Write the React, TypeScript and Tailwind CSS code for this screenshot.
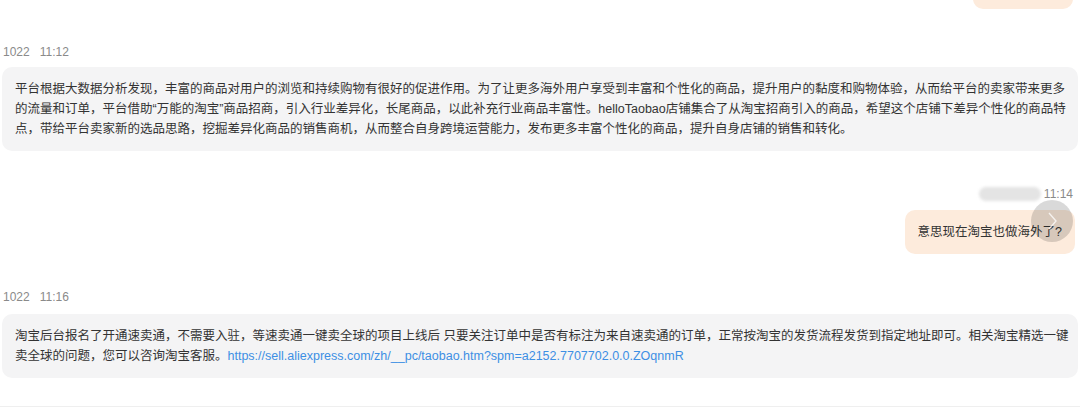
import type { ReactNode } from "react";

const FONT = { fontFamily: '"Liberation Sans", Arial, "Noto Sans CJK SC", sans-serif' };

function Stamp({ children }: { children: ReactNode }) {
  return <div className="h-4 pl-[3px] text-[12px] leading-4 text-[#8a8a8a]">{children}</div>;
}

function GrayBubble({ lines }: { lines: ReactNode[] }) {
  return (
    <div className="mx-[2px] rounded-[10px] bg-[#f4f4f5] px-[13px] py-3 text-[12.5px] leading-5 text-[#333]">
      {lines.map((l, i) => (
        <div key={i} className="whitespace-nowrap">
          {l}
        </div>
      ))}
    </div>
  );
}

export default function App() {
  return (
    <div className="relative h-[416px] w-[1080px] overflow-hidden bg-white" style={FONT}>
      <div className="flex flex-col">
        {/* earlier outgoing bubble, cut off at top */}
        <div className="-mt-9 mr-[7px] flex justify-end">
          <div className="h-[45px] w-[100px] rounded-[10px] bg-[#fdebdc]" />
        </div>

        <div className="mt-[35px]">
          <Stamp>1022&nbsp;&nbsp;&nbsp;11:12</Stamp>
        </div>
        <div className="mt-[7px]">
          <GrayBubble
            lines={[
              "平台根据大数据分析发现，丰富的商品对用户的浏览和持续购物有很好的促进作用。为了让更多海外用户享受到丰富和个性化的商品，提升用户的黏度和购物体验，从而给平台的卖家带来更多",
              "的流量和订单，平台借助“万能的淘宝”商品招商，引入行业差异化，长尾商品，以此补充行业商品丰富性。helloTaobao店铺集合了从淘宝招商引入的商品，希望这个店铺下差异个性化的商品特",
              "点，带给平台卖家新的选品思路，挖掘差异化商品的销售商机，从而整合自身跨境运营能力，发布更多丰富个性化的商品，提升自身店铺的销售和转化。",
            ]}
          />
        </div>

        <div className="mt-[35px] mr-[7px] flex h-4 items-center justify-end gap-[3px]">
          <span className="h-[14px] w-[62px] rounded-full bg-[#e4e4e4] blur-[1.5px]" />
          <span className="text-[12px] leading-4 text-[#8a8a8a]">11:14</span>
        </div>
        <div className="mt-2 mr-[5px] flex justify-end">
          <div className="rounded-[10px] bg-[#fdebdc] px-[13px] py-3 text-[12.5px] leading-5 text-[#333]">
            意思现在淘宝也做海外了?
          </div>
        </div>

        <div className="mt-[35px]">
          <Stamp>1022&nbsp;&nbsp;&nbsp;11:16</Stamp>
        </div>
        <div className="mt-[9px]">
          <GrayBubble
            lines={[
              "淘宝后台报名了开通速卖通，不需要入驻，等速卖通一键卖全球的项目上线后 只要关注订单中是否有标注为来自速卖通的订单，正常按淘宝的发货流程发货到指定地址即可。相关淘宝精选一键",
              <>
                卖全球的问题，您可以咨询淘宝客服。
                <span className="text-[#3d8fe4]">https://sell.aliexpress.com/zh/__pc/taobao.htm?spm=a2152.7707702.0.0.ZOqnmR</span>
              </>,
            ]}
          />
        </div>

        <div className="mt-[28px] h-px bg-[#efefef]" />
      </div>

      {/* floating next button */}
      <div className="absolute left-[1031px] top-[200px] flex h-[42px] w-[42px] items-center justify-center rounded-full bg-black/15">
        <svg width="12" height="20" viewBox="0 0 12 20" fill="none">
          <path d="M3 2 L10 10 L3 18" stroke="white" strokeOpacity="0.75" strokeWidth="1.4" />
        </svg>
      </div>
    </div>
  );
}
